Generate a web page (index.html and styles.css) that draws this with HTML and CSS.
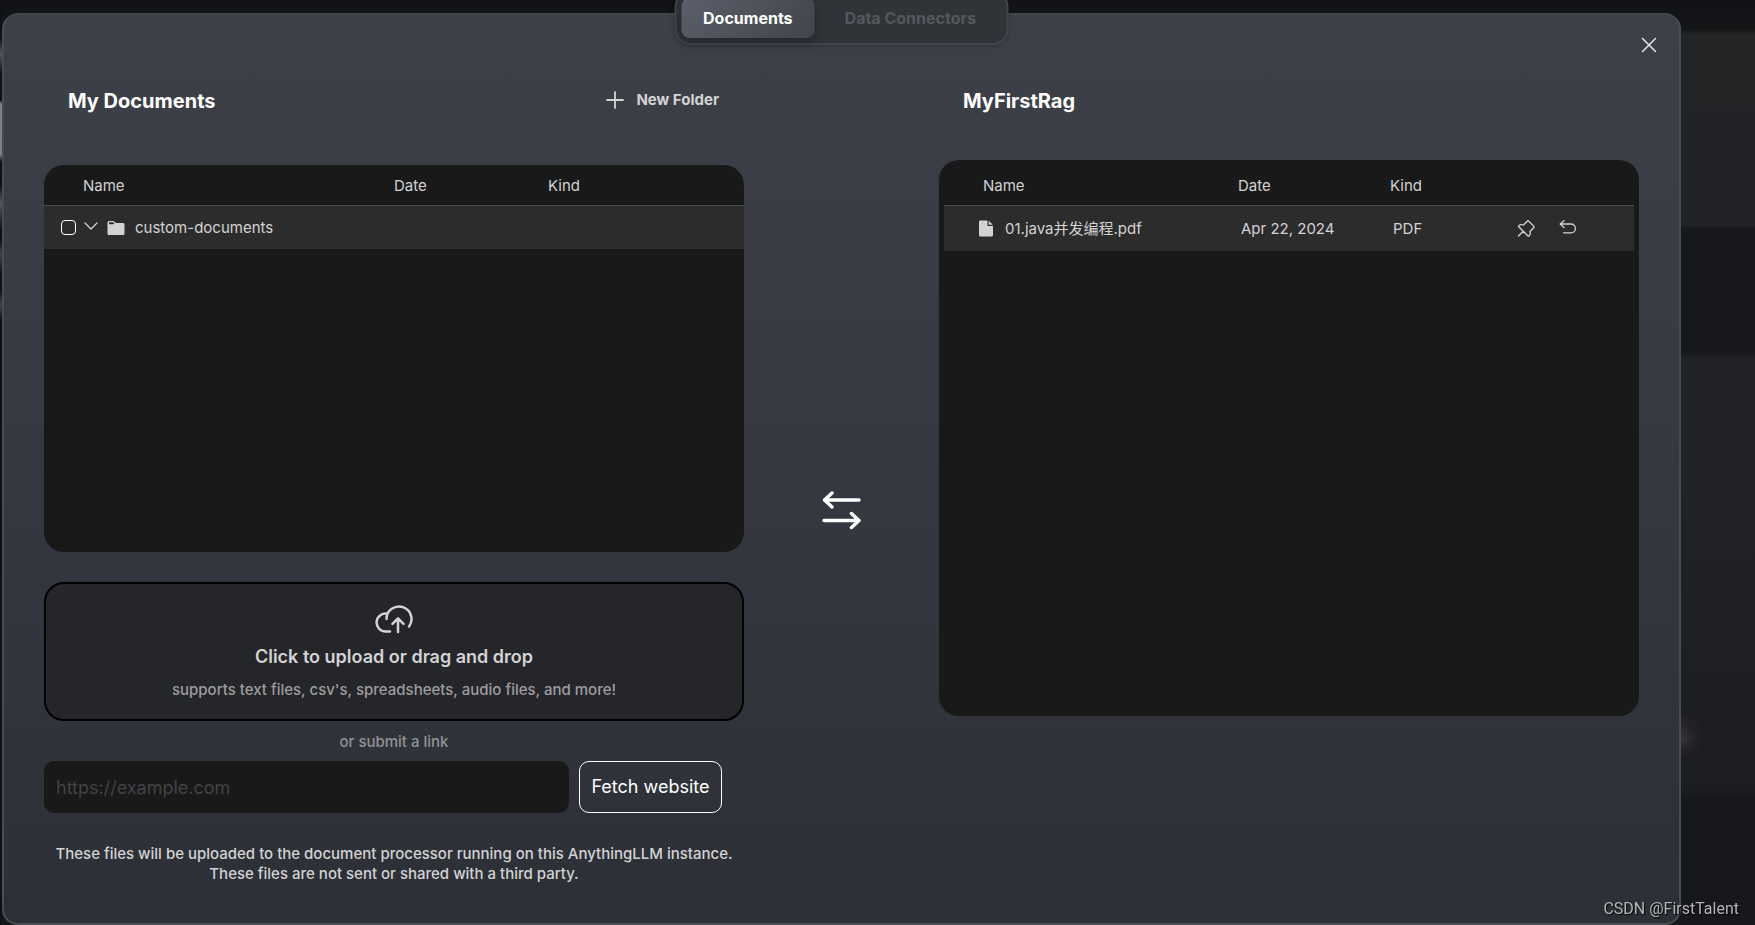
FILE: index.html
```html
<!DOCTYPE html>
<html lang="en">
<head>
<meta charset="utf-8">
<meta name="viewport" content="width=device-width, initial-scale=1">
<title>Documents</title>
<link rel="stylesheet" href="styles.css">
</head>
<body>
<div class="scroll-hint" aria-hidden="true">
  <svg viewBox="0 0 40 40" width="40" height="40"><circle cx="20" cy="20" r="20" fill="#2a2a2b" stroke="none"/><path d="M20 10v18M12 20l8 8 8-8" fill="none" stroke="#666" stroke-width="4"/></svg>
</div>
<main class="modal">
  <nav class="tabs">
    <button class="tab tab-active" type="button">Documents</button>
    <button class="tab" type="button">Data Connectors</button>
  </nav>
  <button class="close" type="button" aria-label="Close">
    <svg viewBox="0 0 16 16" width="16" height="16"><path d="M1.500 1.500l13 13M14.500 1.500l-13 13"/></svg>
  </button>

  <section class="column">
    <header class="column-head">
      <h2>My Documents</h2>
      <button class="new-folder" type="button">
        <svg viewBox="0 0 18 18" width="18" height="18"><path d="M9 1v16M1 9h16"/></svg>
        New Folder
      </button>
    </header>
    <div class="panel panel-source">
      <table class="files source-files">
        <colgroup><col class="c-name"><col class="c-date"><col class="c-kind"></colgroup>
        <thead><tr><th>Name</th><th>Date</th><th>Kind</th></tr></thead>
        <tbody><tr>
          <td colspan="3">
            <div class="folder">
              <input type="checkbox" id="pick-folder" class="check">
              <svg class="caret" viewBox="0 0 14 14" width="14" height="14"><path d="M1 2l6 6 6-6"/></svg>
              <svg class="solid" viewBox="0 0 18 16" width="18" height="16"><path fill-rule="evenodd" d="M2 1h4.500l2.500 2h7q1.500 0 1.500 1.500v9q0 1.500-1.500 1.500H2q-1.500 0-1.500-1.500v-11Q.5 1 2 1zM2 2.300v2h4.200l1.300-1-1.400-1z"/></svg>
              <label for="pick-folder">custom-documents</label>
            </div>
          </td>
        </tr></tbody>
      </table>
    </div>
    <button class="dropzone" type="button">
      <svg viewBox="0 0 40 30" width="40" height="30"><path d="M16 27.500h-4.500a9 9 0 1 1 2-17.800M12.500 15a12.500 12.500 0 1 1 22.500 7.500M24 28V14.500M18.500 19.800L24 14.300l5.500 5.500"/></svg>
      <span class="drop-title">Click to upload or drag and drop</span>
      <span class="drop-note">supports text files, csv's, spreadsheets, audio files, and more!</span>
    </button>
    <label class="or-link" for="link">or submit a link</label>
    <form class="link-form">
      <input id="link" class="link-input" type="url" placeholder="https://example.com">
      <button class="fetch" type="button">Fetch website</button>
    </form>
    <p class="notice">These files will be uploaded to the document processor running on this AnythingLLM instance.<br>These files are not sent or shared with a third party.</p>
  </section>

  <div class="swap" aria-hidden="true">
    <svg viewBox="0 0 40 40" width="40" height="40"><path d="M37 10H2.500M10 3L2.500 10l7.500 7M2 30.500h35M29.500 23.500l7.500 7-7.500 7"/></svg>
  </div>

  <section class="column">
    <header class="column-head"><h2>MyFirstRag</h2></header>
    <div class="panel panel-workspace">
      <table class="files workspace-files">
        <colgroup><col class="c-name"><col class="c-date"><col class="c-kind"><col></colgroup>
        <thead><tr><th>Name</th><th>Date</th><th>Kind</th><th></th></tr></thead>
        <tbody><tr>
          <td><div class="file"><svg class="solid" viewBox="0 0 14 16" width="14" height="17"><path d="M1.200 0H8.500v5.500H14v9.300q0 1.200-1.200 1.200H1.200Q0 16 0 14.800V1.200Q0 0 1.200 0zM9.700.2L13.800 4.300H9.700z"/></svg>01.java并发编程.pdf</div></td>
          <td>Apr 22, 2024</td>
          <td>PDF</td>
          <td><div class="actions">
            <button type="button" aria-label="Pin"><svg viewBox="0 0 18 18" width="18" height="18"><path d="M10.200 1.200q.8-.8 1.600 0l4.900 4.900q.7.800 0 1.600L13 11.500c.7 1.600.2 3.200-1 4.500q-.5.500-1 0L1.800 6.800q-.6-.6 0-1.100C3 4.700 4.800 4.400 6.500 5zM6.200 11.300l-4.700 4.700"/></svg></button>
            <button type="button" aria-label="Remove"><svg viewBox="0 0 18 18" width="18" height="18"><path d="M5 .7L1.200 4 5 7.500M1.200 4h10.800a4.400 4.400 0 0 1 0 8.800H4.500"/></svg></button>
          </div></td>
        </tr></tbody>
      </table>
    </div>
  </section>
</main>
<div class="watermark">CSDN @FirstTalent</div>
</body>
</html>
```
FILE: styles.css
```css
* { box-sizing: border-box; }

body {
  margin: 0;
  min-height: 100vh;
  padding: 13px 74px 0 2px;
  overflow: hidden;
  font-family: Inter, "Noto Sans CJK SC", sans-serif;
  font-size: 15px;
  line-height: 20px;
  color: #d3d3d4;
  background:
    linear-gradient(#0f1114 0 38px, #555 54px, #0f1114 74px 100px, #808080 104px 154px, #0f1114 162px 185px, #555 203px, #0f1114 230px 240px, #444 254px, #0f1114 275px 290px, #444 305px, #0f1114 320px) 0 0 / 2px 100% no-repeat,
    linear-gradient(#111316 0 10px, #141517 30px, #232425 34px 104px, #222326 108px 225px, #17181b 229px 352px, #212226 358px 500px, #1c1d20 790px, #17181b 800px);
}

button {
  font: inherit;
  color: inherit;
  background: none;
  border: 0;
  padding: 0;
}

svg {
  display: block;
  flex: none;
  fill: none;
  stroke: currentColor;
  stroke-width: 1.300;
  stroke-linecap: round;
  stroke-linejoin: round;
}

svg.solid { fill: currentColor; stroke: none; }

.scroll-hint {
  position: absolute;
  right: 54px;
  top: 716px;
  opacity: .4;
  filter: blur(3px);
}

.modal {
  position: relative;
  min-height: calc(100vh - 13px);
  padding: 0 40px 34px;
  display: grid;
  grid-template-columns: 1fr 195px 1fr;
  border: 2px solid #494c54;
  border-top-color: #42454c;
  border-radius: 16px;
  background: linear-gradient(#3d4047, #373a43 40%, #2c2f35);
}

.tabs {
  position: absolute;
  top: -24px;
  left: 50%;
  transform: translateX(-50%);
  display: flex;
  padding: 5px;
  border: 2px solid #42454b;
  border-radius: 16px;
  background: #303338;
  box-shadow: 0 1px 4px rgba(0, 0, 0, .2);
}

.tab {
  height: 40px;
  padding: 0 26px 0 30px;
  border-radius: 8px;
  font-size: 16px;
  font-weight: 700;
  color: #55585d;
  white-space: nowrap;
}

.tab-active {
  padding: 0 22px;
  color: #fff;
  background: linear-gradient(135deg, #5b5f69, #41444c);
  box-shadow: 0 4px 12px rgba(0, 0, 0, .25);
}

.close {
  position: absolute;
  top: 22px;
  right: 22px;
}

.close svg { color: #e4e4e6; stroke-width: 1.500; }

.column {
  display: flex;
  flex-direction: column;
  min-width: 0;
}

.column-head {
  height: 145px;
  padding: 28px 25px 0 24px;
  display: flex;
  justify-content: space-between;
  align-items: flex-start;
}

.column-head h2 {
  margin: 0;
  line-height: 116px;
  font-size: 20px;
  font-weight: 700;
  color: #fff;
}

.new-folder {
  display: flex;
  align-items: center;
  gap: 12px;
  height: 114px;
  font-weight: 700;
}

.new-folder svg { stroke-width: 1.800; }

.panel {
  background: #19191a;
  border-radius: 20px;
  overflow: hidden;
}

.panel-source { margin-top: 5px; height: 387px; }
.panel-workspace { height: 556px; padding: 5px; }

.files {
  width: 100%;
  table-layout: fixed;
  border-collapse: collapse;
}

.files th {
  height: 40px;
  padding: 2px 0 0;
  font-weight: 400;
  text-align: left;
}

.files th:first-child { padding-left: 39px; }

.files tbody tr { border-top: 1px solid #48494a; background: #2c2c2c; }
.files td { height: 44px; padding: 1px 0 0; }

.source-files .c-name { width: 50%; }
.source-files .c-date { width: 22%; }
.source-files .c-kind { width: 28%; }

.workspace-files td { height: 46px; padding-left: 3px; }
.workspace-files td:first-child { padding-left: 35px; }
.workspace-files .c-name { width: 294px; }
.workspace-files .c-date { width: 152px; }
.workspace-files .c-kind { width: 116px; }

.folder, .file, .actions {
  display: flex;
  align-items: center;
}

.folder { gap: 8px; padding-left: 17px; }
.folder .solid { margin-left: 1px; }
.folder label { padding-left: 2px; }
.file { gap: 12px; white-space: nowrap; }
.actions { gap: 24px; padding-left: 8px; }

.check {
  appearance: none;
  width: 15px;
  height: 15px;
  margin: 0;
  border: 1px solid #fff;
  border-radius: 4px;
}

.dropzone {
  margin-top: 30px;
  height: 139px;
  border: 2px solid #000;
  border-radius: 20px;
  background: #25262a;
  display: flex;
  flex-direction: column;
  align-items: center;
  padding: 20px 0;
}

.dropzone svg { stroke-width: 2.500; }

.drop-title {
  margin-top: 11px;
  font-size: 18px;
  line-height: 24px;
  font-weight: 600;
}

.drop-note {
  margin-top: 11px;
  font-weight: 500;
  color: #9d9d9f;
}

.or-link {
  margin: 11px auto 9px;
  font-weight: 500;
  color: #929397;
}

.link-form {
  display: flex;
  gap: 10px;
  padding-right: 22px;
}

.link-input {
  flex: 1;
  min-width: 0;
  height: 52px;
  padding: 0 12px;
  border: 0;
  border-radius: 10px;
  background: #19191a;
  color: #fff;
  font: inherit;
  font-size: 18px;
}

.link-input::placeholder { color: #434346; opacity: 1; }

.fetch {
  width: 143px;
  height: 52px;
  border: 1px solid #fff;
  border-radius: 10px;
  font-size: 18px;
  color: #fff;
  white-space: nowrap;
}

.notice {
  margin: 31px 0 0;
  text-align: center;
  font-weight: 500;
}

.swap {
  padding-top: 475px;
  display: flex;
  justify-content: center;
  color: #fff;
}

.swap svg { stroke-width: 3.500; }

.watermark {
  position: fixed;
  right: 16px;
  bottom: 5px;
  font-family: Roboto, sans-serif;
  font-size: 16px;
  line-height: 22px;
  color: #b5b6b8;
  text-shadow: 1px 1px 1px #000;
}
```
